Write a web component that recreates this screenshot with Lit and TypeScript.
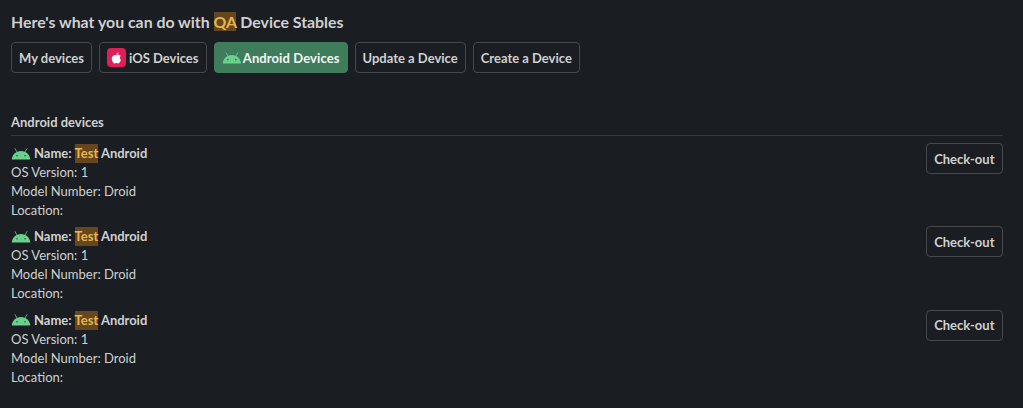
import { LitElement, html, css, svg } from 'lit';
import { customElement } from 'lit/decorators.js';

const androidIcon = svg`<path d="M4 1.6 L6 5 M16 1.6 L14 5" stroke="#69d18a" stroke-width="0.8" stroke-linecap="round" fill="none"/><path fill="#69d18a" d="M0.8 12.6 C1 7.8 4.8 4 10 4 C15.2 4 19 7.8 19.2 12.6 Z"/><circle cx="6" cy="8.8" r="0.8" fill="#2a5a3e"/><circle cx="14" cy="8.8" r="0.8" fill="#2a5a3e"/>`;

const devices = [
  { model: 'Droid' },
  { model: 'Droid' },
  { model: 'Droid' },
];

@customElement('app-root')
export class AppRoot extends LitElement {
  static styles = css`
    :host {
      display: block;
      height: 408px;
      background: #1a1d21;
      color: #cfd0d1;
      font-family: Lato, "Liberation Sans", sans-serif;
      font-size: 13px;
      line-height: 19px;
      overflow: hidden;
    }
    .page {
      padding: 11px 20px 0 11px;
    }
    h1 {
      margin: 0;
      font-size: 15.86px;
      font-weight: 700;
      line-height: 22px;
    }
    mark {
      background: #66461f;
      color: #e8b64c;
    }
    .actions {
      display: flex;
      gap: 7px;
      margin-top: 9px;
    }
    button {
      display: flex;
      align-items: center;
      gap: 3px;
      height: 31px;
      box-sizing: border-box;
      padding: 0 7px;
      border: 1px solid #46484c;
      border-radius: 4px;
      background: transparent;
      color: #cfd0d1;
      font: 700 13px Lato, "Liberation Sans", sans-serif;
      white-space: nowrap;
    }
    button.primary {
      gap: 1.5px;
      width: 134px;
      letter-spacing: 0.1px;
      background: #3f7c5c;
      border-color: #3f7c5c;
      color: #f4f6f5;
    }
    .apple {
      width: 19px;
      height: 19px;
      border-radius: 4px;
      background: #e01e5a;
      display: flex;
      align-items: center;
      justify-content: center;
    }
    h2 {
      margin: 40px 0 0;
      padding-bottom: 3px;
      font-size: 13px;
      font-weight: 700;
      line-height: 19px;
      border-bottom: 1px solid #35373b;
    }
    .device {
      display: flex;
      justify-content: space-between;
      align-items: flex-start;
      height: 83.4px;
    }
    .info {
      padding-top: 8px;
    }
    .device button {
      margin-top: 7px;
      padding: 0 7.5px;
    }
    .name {
      font-weight: 700;
      display: flex;
      align-items: center;
      white-space: pre;
      letter-spacing: -0.03px;
    }
    .name svg {
      margin-right: 3px;
    }
  `;

  render() {
    return html`
      <div class="page">
        <h1>Here's what you can do with <mark>QA</mark> Device Stables</h1>
        <div class="actions">
          <button>My devices</button>
          <button>
            <span class="apple">
              <svg width="11" height="12" viewBox="0 0 11 12">
                <path fill="#fff" d="M5.5 3.2 C6.5 2.6 8.6 2.4 9.7 4 C8.4 4.9 8.5 7 10 7.7 C9.5 9.3 8.3 11.4 7.2 11.4 C6.4 11.4 6.1 10.9 5.4 10.9 C4.7 10.9 4.3 11.4 3.6 11.4 C2.3 11.4 0.8 8.6 0.8 6.4 C0.8 3.6 3.6 2.4 5.5 3.2 Z M5.4 2.7 C5.4 1.5 6.4 0.6 7.5 0.5 C7.6 1.7 6.6 2.8 5.4 2.7 Z"/>
              </svg>
            </span>
            iOS Devices
          </button>
          <button class="primary">
            <svg width="20" height="14" viewBox="0 0 20 14">${androidIcon}</svg>
            Android Devices
          </button>
          <button>Update a Device</button>
          <button>Create a Device</button>
        </div>
        <h2>Android devices</h2>
        ${devices.map(
          (device) => html`
            <div class="device">
              <div class="info">
                <div class="name"><svg width="20" height="14" viewBox="0 0 20 14">${androidIcon}</svg>Name: <mark>Test</mark> Android</div>
                <div>OS Version: 1</div>
                <div>Model Number: ${device.model}</div>
                <div>Location:</div>
              </div>
              <button>Check-out</button>
            </div>
          `
        )}
      </div>
    `;
  }
}
